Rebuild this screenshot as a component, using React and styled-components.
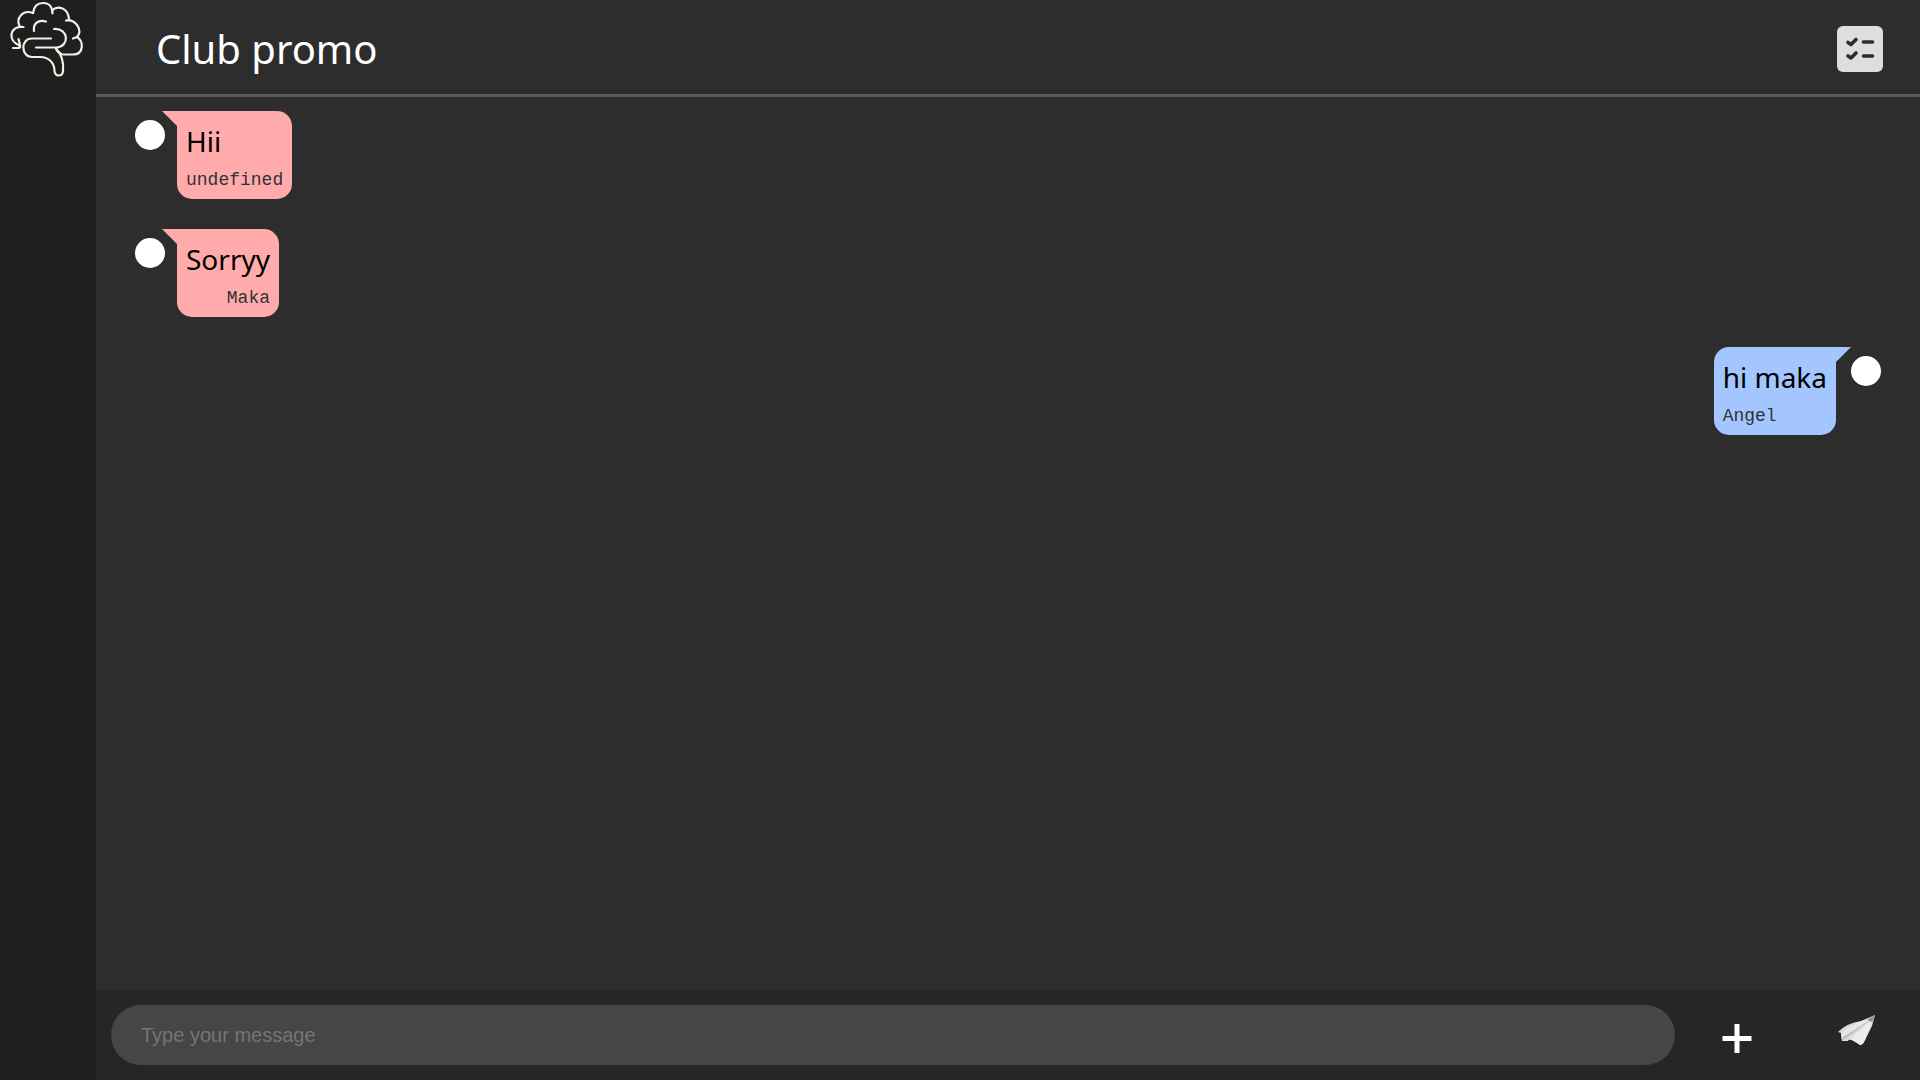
import React, { useState } from "react";
import styled, { createGlobalStyle } from "styled-components";

const messages = [
  { id: 1, text: "Hii", name: "undefined", mine: false },
  { id: 2, text: "Sorryy", name: "Maka", mine: false },
  { id: 3, text: "hi maka", name: "Angel", mine: true },
];

const BrainLogo = () => {
  return (
    <svg
      width="96"
      height="80"
      viewBox="0 0 96 80"
      fill="none"
      stroke="#f1f1e6"
      strokeWidth="2.2"
      strokeLinecap="round"
      strokeLinejoin="round"
      aria-hidden="true"
    >
      {/* outer lobes */}
      <path d="M20 46C14 43 11 39 11.500 35C12 29 17 26 23.500 27" />
      <path d="M19.500 26C16 19 22 9 33 13" />
      <path d="M33 13C34 6 38 3 43 3C49 3 52.500 7 52.500 13.500" />
      <path d="M52.500 10C58 5 69 8 69 20" />
      <path d="M66 20.500C76 19 83 30 77 37L73 38.500" />
      <path d="M77 37C84 41 84 54.500 73 54.500H62C59 53 57 51 56 48.500" />
      <path d="M13 48H18.500C20 48 20.500 46.500 20 45L18.500 39" />
      {/* folds and stem */}
      <path d="M34 31C33 24 38 19 46 21.500" />
      <path d="M54 29C69 28 70 47 56 47.500H36" />
      <path d="M51 38.500H32C20 38.500 21 57 32 57H40C50 57 54.500 64 54.500 71C55 77 63 77 63 71C64 62 62 55 56 48.500" />
    </svg>
  );
};

const TaskIcon = () => {
  return (
    <svg width="46" height="46" viewBox="0 0 46 46" fill="none" aria-hidden="true">
      <rect width="46" height="46" rx="6" fill="#dedede" />
      <path
        d="M11 16.500L14 18.500L19 13.500M11 30L14 32L19 27M26.500 16H35.500M26.500 30H35.500"
        stroke="#2d2d2d"
        strokeWidth="3.600"
        strokeLinecap="round"
        strokeLinejoin="round"
      />
    </svg>
  );
};

const PlusIcon = () => {
  return (
    <svg width="30" height="36" viewBox="0 0 30 36" aria-hidden="true">
      <path d="M15 7V36M.500 21.500H29.500" stroke="#fff" strokeWidth="5" />
    </svg>
  );
};

const PlaneIcon = () => {
  return (
    <svg width="40" height="44" viewBox="0 0 40 44" aria-hidden="true">
      <path d="M38 2L35 13L28 27Q26 32 23 32L18 29Q12 25 11 28L5 28L4 20L1 19Q10 10 24 8Z" fill="#dcdbdc" />
      <path d="M37 4L5 28L4 20Q18 9 37 4Z" fill="#e8e7e8" />
      <path d="M36 5L5 28L6 24Z" fill="#bdbcbd" />
      <path d="M36 6L13 26Q18 27 23 32Q26 32 28 27Z" fill="#eeecef" />
      <path d="M38 2L30 7L35 9Z" fill="#8d8d8d" />
    </svg>
  );
};

const Message = ({ text, name, mine }) => {
  return (
    <Row $mine={mine}>
      <Avatar />
      <Bubble $mine={mine}>
        <Text>{text}</Text>
        <Name $mine={mine}>{name}</Name>
      </Bubble>
    </Row>
  );
};

const App = () => {
  const [value, setValue] = useState("");

  return (
    <Page>
      <GlobalStyle />
      <Sidebar>
        <BrainLogo />
      </Sidebar>
      <Chat>
        <Header>
          <Title>Club promo</Title>
          <IconButton type="button" aria-label="Tasks">
            <TaskIcon />
          </IconButton>
        </Header>
        <Messages>
          {messages.map((message) => (
            <Message key={message.id} {...message} />
          ))}
        </Messages>
        <Footer onSubmit={(e) => e.preventDefault()}>
          <MessageInput
            aria-label="Message"
            placeholder="Type your message"
            value={value}
            onChange={(e) => setValue(e.target.value)}
          />
          <FooterButton type="button" aria-label="Add">
            <PlusIcon />
          </FooterButton>
          <FooterButton type="submit" aria-label="Send">
            <PlaneIcon />
          </FooterButton>
        </Footer>
      </Chat>
    </Page>
  );
};

export default App;

const GlobalStyle = createGlobalStyle`
  * {
    box-sizing: border-box;
  }

  body {
    margin: 0;
    background-color: #2d2d2d;
    font-family: "Noto Sans", "Open Sans", sans-serif;
  }
`;

const Page = styled.div`
  display: flex;
  min-height: 100vh;
`;

const Sidebar = styled.nav`
  flex: 0 0 5%;
  background-color: #1f1f1f;
`;

const Chat = styled.main`
  display: flex;
  flex: 1;
  flex-direction: column;
  min-width: 0;
`;

const Header = styled.header`
  display: flex;
  justify-content: space-between;
  align-items: center;
  padding: 20px 37px 16px 60px;
  border-bottom: 3px solid #5a5a5a;
`;

const Title = styled.h1`
  margin: 0;
  color: #fff;
  font-size: 40px;
  font-weight: 400;
  line-height: 58px;
`;

const IconButton = styled.button`
  display: flex;
  padding: 0;
  border: none;
  background: none;
  cursor: pointer;
`;

const Messages = styled.section`
  display: flex;
  flex: 1;
  flex-direction: column;
  gap: 30px;
  padding: 14px 39px;
`;

const Row = styled.article`
  display: flex;
  flex-direction: ${({ $mine }) => ($mine ? "row-reverse" : "row")};
  align-items: flex-start;
`;

const Avatar = styled.div`
  width: 30px;
  height: 30px;
  margin-top: 9px;
  border-radius: 50%;
  background-color: #fff;
`;

const Bubble = styled.div`
  position: relative;
  margin: ${({ $mine }) => ($mine ? "0 15px 0 0" : "0 0 0 12px")};
  padding: 9px;
  border-radius: ${({ $mine }) => ($mine ? "15px 0 15px 15px" : "0 15px 15px 15px")};
  background-color: ${({ $mine }) => ($mine ? "#a3c6ff" : "#ffabab")};

  &::before {
    content: "";
    position: absolute;
    top: 0;
    ${({ $mine }) => ($mine ? "left: 100%" : "right: 100%")};
    width: 15px;
    height: 15px;
    background-color: inherit;
    clip-path: ${({ $mine }) =>
      $mine ? "polygon(0 0, 100% 0, 0 100%)" : "polygon(0 0, 100% 0, 100% 100%)"};
  }
`;

const Text = styled.p`
  margin: 0;
  color: #000;
  font-size: 28px;
  line-height: 42px;
`;

const Name = styled.p`
  margin: 8px 0 0;
  color: #333;
  font-family: "Liberation Mono", monospace;
  font-size: 18px;
  line-height: 20px;
  text-align: ${({ $mine }) => ($mine ? "left" : "right")};
`;

const Footer = styled.form`
  display: flex;
  align-items: center;
  padding: 15px 3px 15px 15px;
  background-color: #262626;
`;

const MessageInput = styled.input`
  flex: 1;
  min-width: 0;
  height: 60px;
  margin-right: 2px;
  padding: 0 30px;
  border: none;
  border-radius: 30px;
  outline: none;
  background-color: #464646;
  color: #fff;
  font-family: "Liberation Sans", sans-serif;
  font-size: 20px;

  &::placeholder {
    color: #757575;
  }
`;

const FooterButton = styled.button`
  display: flex;
  justify-content: center;
  width: 120px;
  padding: 0;
  border: none;
  background: none;
  cursor: pointer;
`;
